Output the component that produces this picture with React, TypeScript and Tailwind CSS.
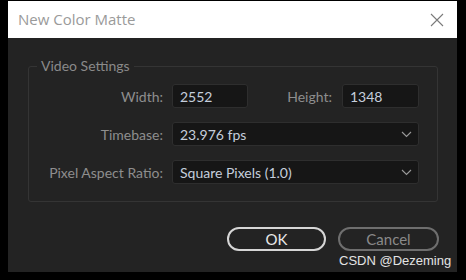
import React from "react";

function Chevron() {
  return (
    <svg width="11" height="7" viewBox="0 0 11 7" className="shrink-0">
      <path d="M1 1 L5.5 5.5 L10 1" fill="none" stroke="#9a9a9a" strokeWidth="1.1" />
    </svg>
  );
}

function Field({ value, w }: { value: string; w: string }) {
  return (
    <div className={`${w} h-[24px] bg-[#161616] border border-[#2e2e2e] rounded-[3px] flex items-center pl-[7px] text-[#c5cedc] text-[14px]`}>
      {value}
    </div>
  );
}

function Select({ value }: { value: string }) {
  return (
    <div className="w-[247px] h-[24px] bg-[#161616] border border-[#2e2e2e] rounded-[3px] flex items-center justify-between pl-[7px] pr-[6px] text-[#c5cedc] text-[14px]">
      <span>{value}</span>
      <Chevron />
    </div>
  );
}

export default function App() {
  const font = { fontFamily: "Lato, 'Open Sans', sans-serif" };
  return (
    <div className="w-[466px] h-[280px] bg-black pt-[1px] pl-[8px] relative overflow-hidden">
      <div className="w-[449px] h-[271px] flex flex-col">
        <div className="h-[37px] bg-white flex items-center justify-between pl-[10px] pr-[13px]">
          <span className="text-[15px] text-[#9a9a9a]" style={{ fontFamily: "'Open Sans', sans-serif" }}>
            New Color Matte
          </span>
          <svg width="14" height="14" viewBox="0 0 14 14">
            <path d="M1 1 L13 13 M13 1 L1 13" stroke="#7a7a7a" strokeWidth="1.1" />
          </svg>
        </div>
        <div className="flex-1 bg-[#232323] flex flex-col pl-[20px] pr-[18px] pt-[19px]" style={font}>
          <fieldset className="w-[410px] border border-[#343434] rounded-[3px] pb-[17px] pt-[9px]">
            <legend className="ml-[8px] px-[4px] text-[14px] text-[#8a8a8a] leading-[18px]">Video Settings</legend>
            <div className="flex flex-col gap-[14px] text-[14px] text-[#8e8e8e]">
              <div className="flex items-center">
                <div className="w-[134px] text-right">Width:</div>
                <div className="ml-[9px] w-[247px] flex items-center">
                  <Field value="2552" w="w-[76px]" />
                  <div className="flex-1 text-right pr-[10px]">Height:</div>
                  <Field value="1348" w="w-[77px]" />
                </div>
              </div>
              <div className="flex items-center">
                <div className="w-[134px] text-right">Timebase:</div>
                <div className="ml-[9px]">
                  <Select value="23.976 fps" />
                </div>
              </div>
              <div className="flex items-center">
                <div className="w-[134px] text-right">Pixel Aspect Ratio:</div>
                <div className="ml-[9px]">
                  <Select value="Square Pixels (1.0)" />
                </div>
              </div>
            </div>
          </fieldset>
          <div className="flex justify-end gap-[12px] mt-[25px]">
            <div className="w-[99px] h-[24px] rounded-full border-2 border-[#d6d6d6] flex items-center justify-center text-[15px] text-[#e8e8e8]">
              OK
            </div>
            <div className="w-[101px] h-[24px] rounded-full border-2 border-[#6e6e6e] flex items-center justify-center text-[15px] text-[#8a8a8a]">
              Cancel
            </div>
          </div>
        </div>
      </div>
      <div
        className="absolute left-[339px] top-[252px] text-[13px] text-[#e4e4e4] leading-[18px]"
        style={{ fontFamily: "'Liberation Sans', Arial, sans-serif" }}
      >
        CSDN @Dezeming
      </div>
    </div>
  );
}
